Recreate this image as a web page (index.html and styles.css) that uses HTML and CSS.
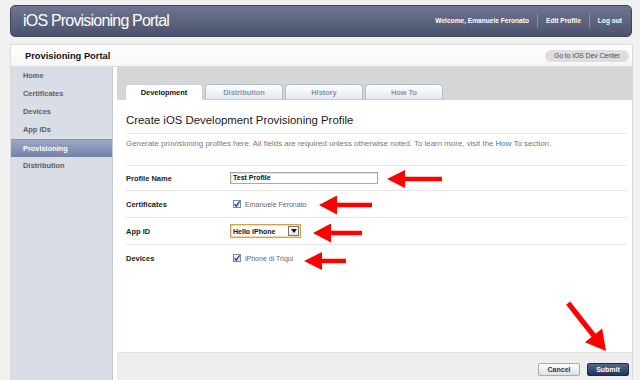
FILE: index.html
```html
<!DOCTYPE html>
<html lang="en">
<head>
    <meta charset="UTF-8">
    <title>iOS Provisioning Portal</title>
    <link rel="stylesheet" href="styles.css">
</head>

<body>
<div class="topbar">
    <div class="brand">iOS Provisioning Portal</div>
    <ul class="user-nav">
        <li>Welcome, Emanuele Feronato</li>
        <li><a href="#">Edit Profile</a></li>
        <li><a href="#">Log out</a></li>
    </ul>
</div>

<div class="portal">
    <div class="portal-head">
        <h2>Provisioning Portal</h2>
        <a class="dev-center" href="#">Go to iOS Dev Center</a>
    </div>
    <div class="portal-body">
        <ul class="side-nav">
            <li><a href="#">Home</a></li>
            <li><a href="#">Certificates</a></li>
            <li><a href="#">Devices</a></li>
            <li><a href="#">App IDs</a></li>
            <li class="active"><a href="#">Provisioning</a></li>
            <li><a href="#">Distribution</a></li>
        </ul>
        <div class="main">
            <div class="tabs">
                <a class="tab active" href="#">Development</a>
                <a class="tab" href="#">Distribution</a>
                <a class="tab" href="#">History</a>
                <a class="tab" href="#">How To</a>
            </div>
            <div class="content">
                <h1>Create iOS Development Provisioning Profile</h1>
                <p class="intro">Generate provisioning profiles here. All fields are required unless otherwise noted. To learn more, visit the <a href="#">How To</a> section.</p>
                <div class="form-row">
                    <label>Profile Name</label>
                    <span class="text-input">Test Profile</span>
                </div>
                <div class="form-row">
                    <label>Certificates</label>
                    <span class="check"><span class="box"><svg width="8" height="8" viewBox="0 0 8 8"><path d="M1.6 4.2 L3.2 6.2 L6.6 1.4" fill="none" stroke="#1f3c8c" stroke-width="1.3"/></svg></span>Emanuele Feronato</span>
                </div>
                <div class="form-row">
                    <label>App ID</label>
                    <span class="select"><span class="select-val">Hello iPhone</span><span class="select-btn"><svg width="6" height="4" viewBox="0 0 6 4"><path d="M0 0 H6 L3 4 Z" fill="#111"/></svg></span></span>
                </div>
                <div class="form-row">
                    <label>Devices</label>
                    <span class="check"><span class="box"><svg width="8" height="8" viewBox="0 0 8 8"><path d="M1.6 4.2 L3.2 6.2 L6.6 1.4" fill="none" stroke="#1f3c8c" stroke-width="1.3"/></svg></span>iPhone di Triqui</span>
                </div>
            </div>
            <div class="actions">
                <button class="btn btn-cancel">Cancel</button>
                <button class="btn btn-submit">Submit</button>
            </div>
        </div>
    </div>
</div>

<!-- red arrows drawn over the screenshot -->
<svg class="arrows" width="640" height="380" viewBox="0 0 640 380">
    <g fill="#f00">
        <polygon points="387,179 405,170 405,176.8 442,176.8 442,181.2 405,181.2 405,188"/>
        <polygon points="319,205 337,195.5 337,202.8 372,202.8 372,207.2 337,207.2 337,214.5"/>
        <polygon points="313,233 331,223.5 331,230.8 362,230.8 362,235.2 331,235.2 331,242.5"/>
        <polygon points="304,261 322,252 322,258.8 346,258.8 346,263.2 322,263.2 322,270"/>
        <polygon transform="translate(606,351) rotate(231.6)" points="0,0 20,-11 20,-2.6 61,-2.6 61,2.6 20,2.6 20,11"/>
    </g>
</svg>
</body>
</html>
```

FILE: styles.css
```css
html,body{margin: 0; padding: 0}
body{height: 380px; overflow: hidden; display: flex; flex-direction: column; position: relative; background: #f1f1f1; font-family: "Liberation Sans", Arial, sans-serif; color: #333}
ul{list-style: none; margin: 0; padding: 0}
a{color: inherit; text-decoration: none}

.topbar{margin: 5px 8px 0 10px; height: 30px; padding: 0 9px 0 12px; border: 1px solid #3f4559; border-radius: 5px; background: linear-gradient(#6f7693, #4b526c); display: flex; align-items: center; justify-content: space-between}
.brand{color: #fff; font-size: 16px; letter-spacing: -0.8px}
.user-nav{display: flex; align-items: center; font-size: 6.6px; font-weight: bold; color: #fff}
.user-nav li{padding: 0 8px; line-height: 14px; border-left: 1px solid #8a90a7}
.user-nav li:first-child{border-left: none}
.user-nav li:last-child{padding-right: 0}

.portal{flex: 1; margin: 7px 7px 0 10px; display: flex; flex-direction: column; background: #fff; border: 1px solid #dcdcdc; border-bottom: none}
.portal-head{height: 21px; padding: 0 3px 0 14px; border-bottom: 1px solid #dcdcdc; background: linear-gradient(#fff, #f6f6f6); display: flex; align-items: center; justify-content: space-between}
.portal-head h2{margin: 0; font-size: 9.3px; color: #111}
.dev-center{height: 12px; line-height: 12px; padding: 0 9px; border-radius: 6px; background: #dedede; font-size: 6.8px; color: #3b4a66}

.portal-body{flex: 1; display: flex}
.side-nav{width: 101px; margin-right: 4px; background: #d9dde5; border-right: 1px solid #c4c9d3}
.side-nav a{display: block; height: 18px; line-height: 18px; padding-left: 12px; font-size: 7.4px; font-weight: bold; color: #5a606b}
.side-nav li.active a{height: 17px; border-top: 1px solid #8591b0; background: linear-gradient(#9ca8c6, #7282a7); color: #fff}

.main{flex: 1; display: flex; flex-direction: column}
.tabs{height: 33px; padding-left: 8px; background: #d4d6d8; display: flex; align-items: flex-end; gap: 2px}
.tab{width: 76px; height: 15px; line-height: 15px; border: 1px solid #b4bccb; border-bottom: none; border-radius: 4px 4px 0 0; background: linear-gradient(#fff, #e2e6ee); box-shadow: inset 0 -1px 0 #c3cbe0; text-align: center; font-size: 7.4px; font-weight: bold; color: #8594ad}
.tab.active{background: #fff; border-color: #cfd2d6; box-shadow: none; color: #111}

.content{flex: 1; padding: 0 5px 0 9px}
.content h1{margin: 13px 0 0; padding-bottom: 6px; border-bottom: 1px solid #e6e6e6; font-size: 11.4px; line-height: 14px; font-weight: normal; color: #1a1a1a}
.intro{margin: 0; padding: 5px 0 16px; border-bottom: 1px solid #e6e6e6; font-size: 7.9px; line-height: 10px; color: #777}
.intro a{color: #2a7bd0}

.form-row{height: 26px; display: flex; align-items: center; border-bottom: 1px solid #e6e6e6}
.form-row:first-of-type{height: 24px}
.form-row:last-child{border-bottom: none}
.form-row label{width: 104px; font-size: 7.5px; font-weight: bold; color: #222}

.text-input{display: block; width: 142px; height: 10px; padding: 0 2px; line-height: 10px; border: 1px solid #a9a9a9; box-shadow: inset 1px 1px 0 #e2e2e2; font-size: 7px; font-weight: bold; color: #111}

.check{display: flex; align-items: center; gap: 4px; margin-left: 3px; font-size: 7px; color: #666}
.box{width: 8px; height: 8px; box-sizing: border-box; border: 1px solid #7d8aa6; background: linear-gradient(#fff, #dfe4ee); display: flex; align-items: center; justify-content: center; overflow: hidden}
.box svg{flex: none}

.select{width: 68px; height: 12px; border: 1px solid #d5a047; box-shadow: inset 0 0 0 1px #f3dba8; display: flex; align-items: center; justify-content: space-between; padding-right: 1px; box-sizing: content-box}
.select-val{padding-left: 2px; font-size: 7px; font-weight: bold; color: #111}
.select-btn{width: 9px; height: 8px; border: 1px solid #777; background: linear-gradient(#fff, #e4e4e4); display: flex; align-items: center; justify-content: center}

.actions{height: 17px; padding: 10px 3px 0 0; border-top: 1px solid #e2e2e2; background: #eee; display: flex; justify-content: flex-end; align-items: flex-start; gap: 7px}
.btn{width: 42px; height: 13px; padding: 0; border-radius: 2px; font-family: "Liberation Sans", Arial, sans-serif; font-size: 7px; font-weight: bold; line-height: 11px}
.btn-cancel{border: 1px solid #a5aab4; background: linear-gradient(#fff, #dde1e8); color: #333}
.btn-submit{border: 1px solid #1d2a45; background: linear-gradient(#55688c, #22335a); color: #fff}

.arrows{position: absolute; left: 0; top: 0; pointer-events: none}
```
